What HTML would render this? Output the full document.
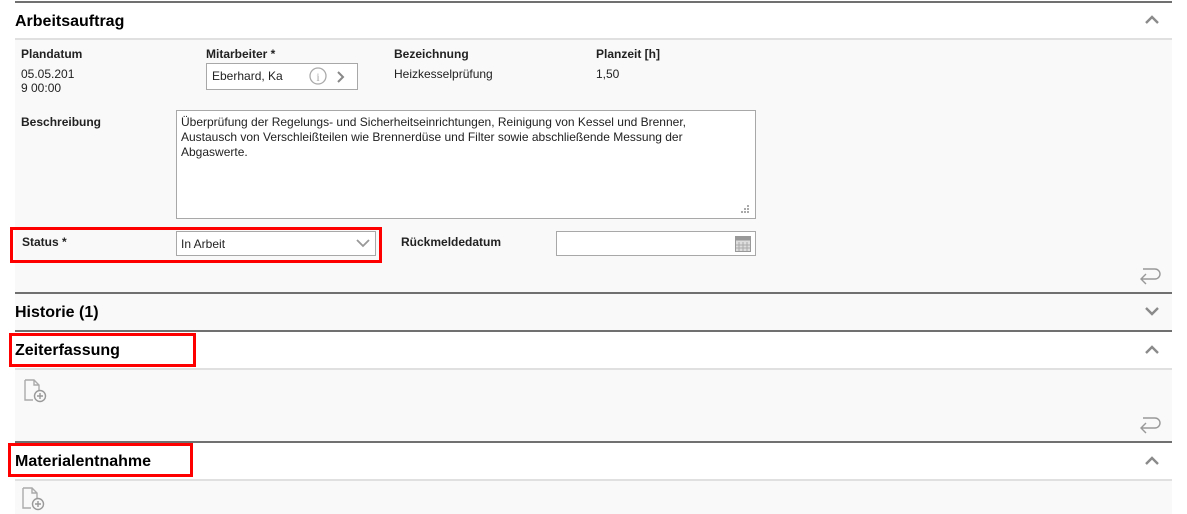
<!DOCTYPE html>
<html><head><meta charset="utf-8"><style>
*{margin:0;padding:0;box-sizing:border-box}
body{width:1187px;height:514px;background:#fff;font-family:"Liberation Sans",Arial,sans-serif;position:relative;overflow:hidden;color:#000}
.a{position:absolute}
.dark{background:#707070;height:2px;left:15px;width:1157px}
.light{background:#e0e0e0;height:2px;left:15px;width:1157px}
.bg{background:#f9f9f9;left:15px;width:1157px}
h2{position:absolute;font-size:16px;font-weight:bold;left:15px}
.lb{position:absolute;font-size:12px;font-weight:bold;color:#222}
.v{position:absolute;font-size:12px;color:#222}
.box{position:absolute;border:1px solid #a8a8a8;background:#fff}
.red{position:absolute;border:3px solid #f00}
</style></head><body>
<div class="a dark" style="top:1px"></div>
<h2 style="top:13px">Arbeitsauftrag</h2>
<svg class="a" style="left:1144px;top:15px" width="16" height="10"><path d="M2 8L8 2L14 8" fill="none" stroke="#8a8a8a" stroke-width="2.4"/></svg>
<div class="a light" style="top:38px"></div>
<div class="a bg" style="top:40px;height:252px"></div>
<div class="lb" style="left:21px;top:47px">Plandatum</div>
<div class="lb" style="left:206px;top:47px">Mitarbeiter *</div>
<div class="lb" style="left:394px;top:47px">Bezeichnung</div>
<div class="lb" style="left:596px;top:47px">Planzeit [h]</div>
<div class="v" style="left:21px;top:67px;line-height:14px">05.05.201<br>9 00:00</div>
<div class="box" style="left:206px;top:63px;width:152px;height:27px"></div>
<div class="v" style="left:212px;top:69px">Eberhard, Ka</div>
<svg class="a" style="left:309px;top:67px" width="40" height="20"><circle cx="9" cy="9" r="8" fill="none" stroke="#aaa" stroke-width="1.3"/><text x="9" y="14" font-size="12" text-anchor="middle" fill="#aaa" font-family="Liberation Serif">i</text><path d="M29 5L34 10L29 15" fill="none" stroke="#888" stroke-width="2"/></svg>
<div class="v" style="left:394px;top:67px">Heizkesselprüfung</div>
<div class="v" style="left:596px;top:67px">1,50</div>
<div class="lb" style="left:21px;top:115px">Beschreibung</div>
<div class="box" style="left:176px;top:110px;width:580px;height:109px"></div>
<div class="v" style="left:181px;top:115px;line-height:15px;width:570px;white-space:nowrap">Überprüfung der Regelungs- und Sicherheitseinrichtungen, Reinigung von Kessel und Brenner,<br>Austausch von Verschleißteilen wie Brennerdüse und Filter sowie abschließende Messung der<br>Abgaswerte.</div>
<svg class="a" style="left:741px;top:205px" width="10" height="10" fill="#aaa"><rect x="6" y="0" width="2" height="2"/><rect x="3" y="3" width="2" height="2"/><rect x="6" y="3" width="2" height="2"/><rect x="0" y="6" width="2" height="2"/><rect x="3" y="6" width="2" height="2"/><rect x="6" y="6" width="2" height="2"/></svg>
<div class="red" style="left:10px;top:227px;width:372px;height:36px"></div>
<div class="lb" style="left:22px;top:235px">Status *</div>
<div class="box" style="left:176px;top:231px;width:200px;height:25px"></div>
<div class="v" style="left:181px;top:237px">In Arbeit</div>
<svg class="a" style="left:356px;top:239px" width="14" height="9"><path d="M1 1L7 7L13 1" fill="none" stroke="#999" stroke-width="1.8"/></svg>
<div class="lb" style="left:401px;top:235px">Rückmeldedatum</div>
<div class="box" style="left:556px;top:231px;width:200px;height:25px"></div>
<svg class="a" style="left:735px;top:234px" width="16" height="18"><rect x="0.5" y="2.5" width="15" height="15" fill="#ddd" stroke="#999"/><rect x="0.5" y="2.5" width="15" height="4" fill="#999"/><path d="M4 8v9M8 8v9M12 8v9M1 11h14M1 14h14" stroke="#aaa"/></svg>
<svg class="a" style="left:1137px;top:265px" width="26" height="20"><path d="M6 4H18a5 5 0 0 1 0 10H4M9 9L4 14L9 19" fill="none" stroke="#999" stroke-width="1.4"/></svg>
<div class="a dark" style="top:292px"></div>
<div class="a bg" style="top:294px;height:36px"></div>
<h2 style="top:304px">Historie (1)</h2>
<svg class="a" style="left:1144px;top:306px" width="16" height="10"><path d="M2 2L8 8L14 2" fill="none" stroke="#8a8a8a" stroke-width="2.4"/></svg>
<div class="a dark" style="top:330px"></div>
<h2 style="top:342px">Zeiterfassung</h2>
<div class="red" style="left:9px;top:333px;width:187px;height:34px"></div>
<svg class="a" style="left:1144px;top:345px" width="16" height="10"><path d="M2 8L8 2L14 8" fill="none" stroke="#8a8a8a" stroke-width="2.4"/></svg>
<div class="a light" style="top:368px"></div>
<div class="a bg" style="top:370px;height:71px"></div>
<svg class="a" style="left:24px;top:379px" width="26" height="24"><path d="M1 1H10L15 6V13M1 1V21H9M10 1V6H15" fill="none" stroke="#aaa" stroke-width="1.4"/><circle cx="16" cy="17" r="5.5" fill="#f9f9f9" stroke="#999" stroke-width="1.4"/><path d="M16 14v6M13 17h6" stroke="#999" stroke-width="1.4"/></svg>
<svg class="a" style="left:1137px;top:414px" width="26" height="20"><path d="M6 4H18a5 5 0 0 1 0 10H4M9 9L4 14L9 19" fill="none" stroke="#999" stroke-width="1.4"/></svg>
<div class="a dark" style="top:441px"></div>
<h2 style="top:453px">Materialentnahme</h2>
<div class="red" style="left:8px;top:443px;width:185px;height:34px"></div>
<svg class="a" style="left:1144px;top:456px" width="16" height="10"><path d="M2 8L8 2L14 8" fill="none" stroke="#8a8a8a" stroke-width="2.4"/></svg>
<div class="a light" style="top:479px"></div>
<div class="a bg" style="top:481px;height:33px"></div>
<svg class="a" style="left:22px;top:487px" width="26" height="24"><path d="M1 1H10L15 6V13M1 1V21H9M10 1V6H15" fill="none" stroke="#aaa" stroke-width="1.4"/><circle cx="16" cy="17" r="5.5" fill="#f9f9f9" stroke="#999" stroke-width="1.4"/><path d="M16 14v6M13 17h6" stroke="#999" stroke-width="1.4"/></svg>
</body></html>
